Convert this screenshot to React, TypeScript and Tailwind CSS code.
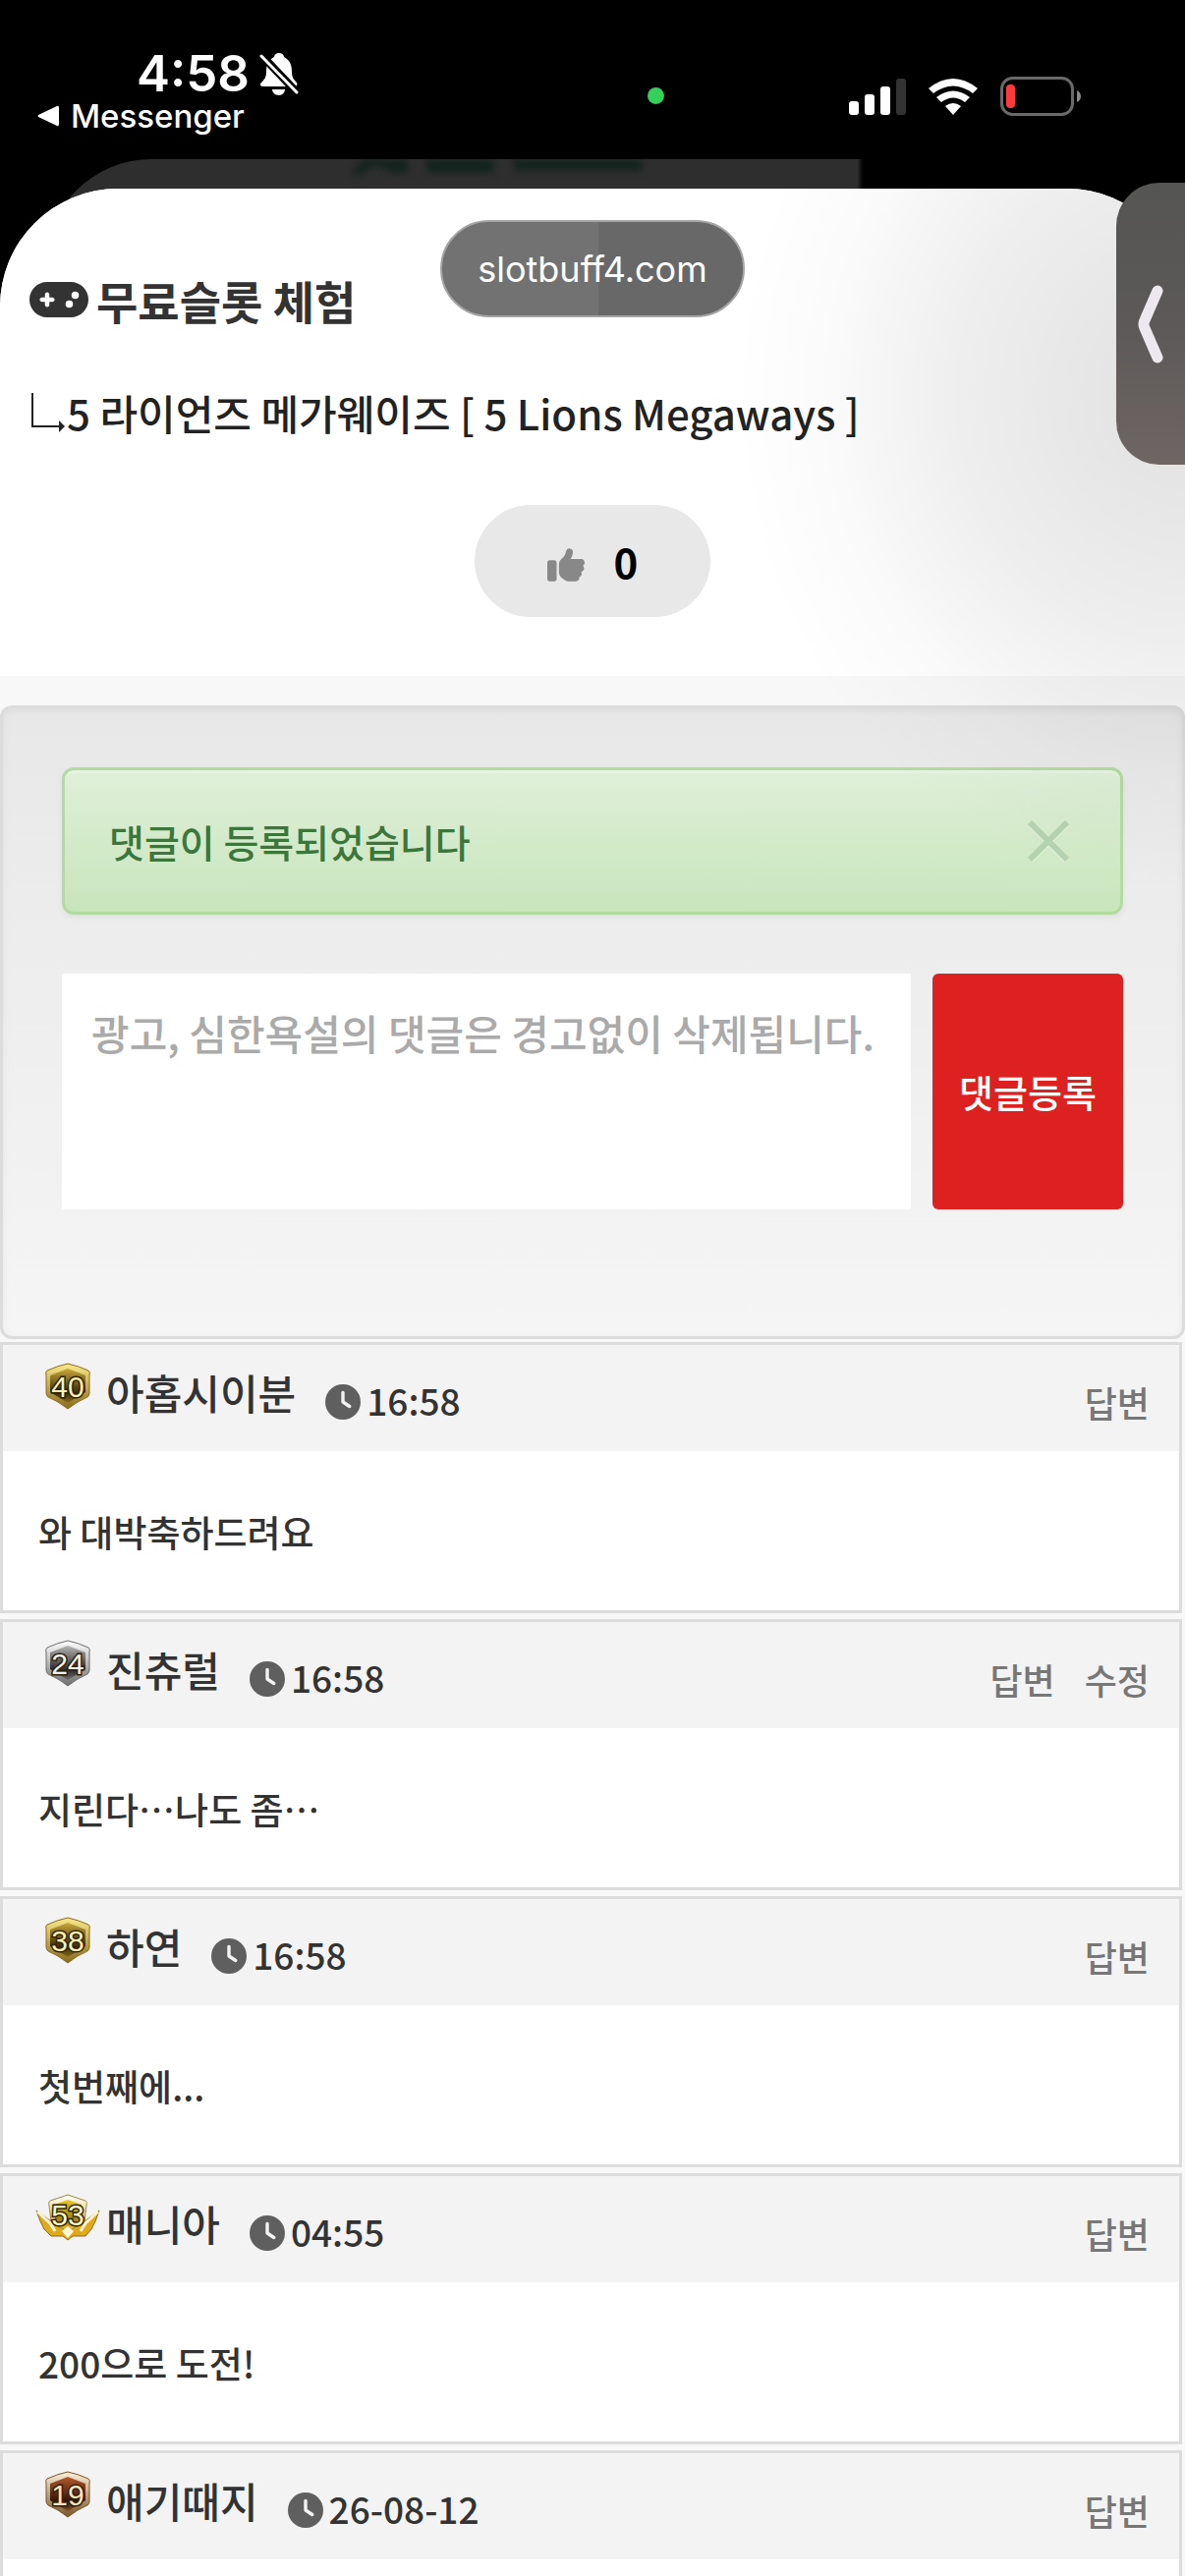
import React from 'react';
import { FaClock, FaGamepad, FaThumbsUp } from 'react-icons/fa6';

type Tone = 'gold' | 'silver' | 'bronze' | 'wings';

interface Comment {
  id: number;
  level: string;
  tone: Tone;
  name: string;
  time: string;
  text: string;
  actions: string[];
}

const comments: Comment[] = [
  { id: 1, level: '40', tone: 'gold', name: '아홉시이분', time: '16:58', text: '와 대박축하드려요', actions: ['답변'] },
  { id: 2, level: '24', tone: 'silver', name: '진츄럴', time: '16:58', text: '지린다⋯나도 좀⋯', actions: ['답변', '수정'] },
  { id: 3, level: '38', tone: 'gold', name: '하연', time: '16:58', text: '첫번째에...', actions: ['답변'] },
  { id: 4, level: '53', tone: 'wings', name: '매니아', time: '04:55', text: '200으로 도전!', actions: ['답변'] },
  { id: 5, level: '19', tone: 'bronze', name: '애기때지', time: '26-08-12', text: '', actions: ['답변'] },
];

// rim light, rim dark, plate top, plate bottom, digits
const tones: Record<Tone, string[]> = {
  gold: ['#fbe98c', '#8a6c1c', '#c9a83a', '#3a2a08', '#fff0b0'],
  silver: ['#ffffff', '#6e6e6e', '#b5b5b5', '#2a2a2a', '#f2f2f2'],
  bronze: ['#fff0dc', '#7a5526', '#b5592c', '#35150a', '#ffe3c0'],
  wings: ['#ffffff', '#d9a514', '#e6c62c', '#a58508', '#fff6c0'],
};

const LevelBadge: React.FC<{ id: number; level: string; tone: Tone }> = ({ id, level, tone }) => {
  const [light, dark, top, bottom, digits] = tones[tone];
  return (
    <svg viewBox="0 0 66 48" className="h-12 w-[66px] shrink-0" role="img" aria-label={`레벨 ${level}`}>
      <defs>
        <linearGradient id={`rim${id}`} x1="0" y1="0" x2="0" y2="1">
          <stop offset="0" stopColor={light} />
          <stop offset="1" stopColor={dark} />
        </linearGradient>
        <linearGradient id={`plate${id}`} x1="0" y1="0" x2="0" y2="1">
          <stop offset="0" stopColor={top} />
          <stop offset="0.7" stopColor={bottom} />
          <stop offset="1" stopColor={dark} />
        </linearGradient>
      </defs>
      {tone === 'wings' ? (
        <>
          <path d="M1 17 L16 28 L33 37 L50 28 L65 17 L61 28 L57 36 L51 43 L38 43 L33 47 L28 43 L16 43 L9 36 L5 28 Z" fill="#e0aa1c" stroke="#8c6a1c" strokeWidth="1" />
          <path d="M2 18 L15 30 L20 38 M64 18 L51 30 L46 38" fill="none" stroke="#fff4d0" strokeWidth="3" />
          <path d="M33 1 L51 7 Q53 8 52 12 L50 28 L33 39 L16 28 L14 12 Q13 8 15 7 Z" fill={`url(#rim${id})`} stroke="#9a8a4a" strokeWidth="1" />
          <path d="M33 6 L47 11 L46 26 L33 34 L20 26 L19 11 Z" fill={`url(#plate${id})`} />
          <path d="M33 33 L39 38 L33 45 L27 38 Z" fill="#fff9d8" />
        </>
      ) : (
        <>
          <path d="M33 1 Q43 3 54 8 Q56 9 55 13 V31 Q55 33 53 35 Q43 39 33 47 Q23 39 13 35 Q11 33 11 31 V13 Q10 9 12 8 Q23 3 33 1 Z" fill={`url(#rim${id})`} stroke={dark} strokeWidth="1" />
          <path d="M33 6 L51 13 V30 L33 41 L15 30 V13 Z" fill={`url(#plate${id})`} />
        </>
      )}
      <text
        x="33"
        y={tone === 'wings' ? 32 : 35}
        textAnchor="middle"
        fontFamily="Liberation Sans, sans-serif"
        fontSize="30"
        fill={digits}
        stroke="#2c2108"
        strokeWidth="3"
        paintOrder="stroke"
      >
        {level}
      </text>
    </svg>
  );
};

const BellOff = () => (
  <svg viewBox="0 0 40 44" className="h-11 w-10" aria-hidden="true">
    <path d="M20 1 C23 1 25 3 25 5 C31 8 33 13 33 20 C33 26 35 28 38 31 C39 33 38 35 36 35 H4 C1 35 0 33 2 31 C5 28 7 26 7 20 C7 13 9 8 15 5 C15 3 17 1 20 1 Z" fill="#fff" />
    <path d="M13 38 H26 C26 41 23 44 20 44 C16 44 13 41 13 38 Z" fill="#fff" />
    <path d="M3 4 L38 41" stroke="#000" strokeWidth="8" />
    <path d="M2 4 L38 41" stroke="#fff" strokeWidth="3" strokeLinecap="round" />
  </svg>
);

const StatusBar: React.FC = () => (
  <header className="flex h-[162px] items-start bg-black pr-[105px] pl-[38px] font-['Inter',sans-serif] text-white">
    <div className="flex w-[621px] flex-col pt-[49px]">
      <div className="flex items-center gap-2.5 pl-[101px]">
        <span className="text-[51px] leading-[52px] font-semibold">4:58</span>
        <BellOff />
      </div>
      <a href="#messenger" className="flex items-center gap-3 text-[33px] leading-[34px]">
        <svg viewBox="0 0 22 22" className="size-[22px]" aria-hidden="true">
          <path d="M20 1 Q22 0 22 3 V19 Q22 22 20 21 L1 12 Q0 11 1 10 Z" fill="#fff" />
        </svg>
        Messenger
      </a>
    </div>
    <div className="mt-[89px] size-[17px] rounded-full bg-[#34d15a]" />
    <div className="mt-[78px] ml-auto flex items-center gap-[22px]">
      <svg viewBox="0 0 58 38" className="h-[38px] w-[58px]" aria-label="신호">
        <rect x="0" y="24" width="10" height="14" rx="3" fill="#fff" />
        <rect x="16" y="17" width="10" height="21" rx="3" fill="#fff" />
        <rect x="32" y="9" width="10" height="29" rx="3" fill="#fff" />
        <rect x="48" y="1" width="10" height="37" rx="3" fill="#333" />
      </svg>
      <svg viewBox="0 0 52 38" className="h-[38px] w-[52px]" aria-label="와이파이">
        <path d="M1 11 Q26 -9 51 11 L46 16 Q26 1 6 16 Z" fill="#fff" />
        <path d="M9 20 Q26 7 43 20 L38 25 Q26 16 14 25 Z" fill="#fff" />
        <path d="M18 29 Q26 23 34 29 L26 38 Z" fill="#fff" />
      </svg>
      <svg viewBox="0 0 83 40" className="h-10 w-[83px]" aria-label="배터리">
        <rect x="1.5" y="1.5" width="72" height="37" rx="11" fill="none" stroke="#6a6a6a" strokeWidth="3" />
        <rect x="6" y="8" width="9" height="24" rx="4" fill="#fb3a3d" />
        <path d="M78 14 Q82 16 82 20 Q82 24 78 26 Z" fill="#8a8a8a" />
      </svg>
    </div>
  </header>
);

// dimmed page that peeks out above the sheet
const BackPage: React.FC = () => (
  <div className="absolute top-0 right-0 left-[45px] h-[120px] overflow-hidden rounded-tl-[110px]">
    <div className="h-full w-[72%] bg-linear-to-r from-[#2e2e2e] from-99% to-black" />
    <svg viewBox="0 0 300 24" className="absolute top-0 left-[308px] h-6 w-[300px] blur-[3px]" aria-hidden="true">
      <path d="M16 0 H62 V14 H44 L36 8 H24 L16 16 H4 Z M80 0 H150 V14 H82 Z M168 0 H300 V12 H172 Z" fill="#14241e" />
    </svg>
  </div>
);

const CommentItem: React.FC<{ comment: Comment }> = ({ comment }) => (
  <li className="border-[3px] border-[#dcdcdc] bg-white">
    <div className="flex h-[108px] justify-between bg-[#f3f3f3] pr-[30px] pl-[33px]">
      <div className="flex items-start">
        <div className="pt-[18px]">
          <LevelBadge id={comment.id} level={comment.level} tone={comment.tone} />
        </div>
        <span className="pt-[18px] pl-1.5 text-[42px] leading-[60px]">{comment.name}</span>
        <FaClock className="mt-10 ml-[30px] size-9 text-[#5f5f5f]" aria-hidden="true" />
        <time className="pt-7 pl-1.5 text-[37px] leading-[56px]">{comment.time}</time>
      </div>
      <div className="flex items-start gap-[30px] pt-8 text-[36px] leading-[52px] text-[#777]">
        {comment.actions.map((action) => (
          <button key={action} type="button">{action}</button>
        ))}
      </div>
    </div>
    <p className="px-9 pt-[54px] pb-[52px] text-[37px] leading-[56px]">{comment.text}</p>
  </li>
);

const App: React.FC = () => {
  return (
    <div className="h-screen overflow-hidden bg-black font-['Noto_Sans_CJK_KR',sans-serif] font-medium text-[#333]">
      <StatusBar />

      <div className="relative pt-[30px]">
        <BackPage />

        <main className="relative overflow-hidden rounded-t-[120px] bg-[#f8f8f8]">
          <section className="flex h-[496px] flex-col bg-white px-[30px]">
            <h1 className="mt-[78px] flex items-center gap-2 text-[46px] leading-[70px] font-bold">
              <FaGamepad className="h-12 w-[60px]" aria-hidden="true" />
              무료슬롯 체험
            </h1>
            <h2 className="mt-[46px] flex items-center text-[42px] leading-[68px] text-[#222]">
              <svg viewBox="0 0 38 44" className="h-11 w-[38px]" aria-hidden="true">
                <path d="M3 2 V36 H32" fill="none" stroke="#222" strokeWidth="2" />
                <path d="M30 30 L36 36 L30 42 Z" fill="#222" />
              </svg>
              5 라이언즈 메가웨이즈 [ 5 Lions Megaways ]
            </h2>
            <button type="button" aria-label="추천" className="mt-[60px] flex h-[114px] w-60 items-center justify-center gap-[30px] self-center rounded-full bg-[#e8e8e8] text-[42px] leading-[60px] font-bold text-black">
              <FaThumbsUp className="mt-2 size-[38px] text-[#888]" aria-hidden="true" />
              0
            </button>
          </section>

          <section className="mt-[30px] rounded-xl border-[3px] border-[#dcdcdc] bg-linear-to-b from-[#e8e8e8] to-[#f5f5f5] px-[60px] pt-[60px] pb-[129px] shadow-[inset_0_3px_9px_rgba(0,0,0,0.05)]">
            <div role="alert" className="flex h-[150px] items-center justify-between rounded-xl border-[3px] border-[#b2dba1] bg-linear-to-b from-[#dff0d8] to-[#c8e5bc] pr-[52px] pl-[45px] text-[39px] leading-[56px] text-[#3c763d] shadow-[inset_0_3px_0_rgba(255,255,255,0.25),0_3px_6px_rgba(0,0,0,0.05)]">
              댓글이 등록되었습니다
              <button type="button" aria-label="닫기">
                <svg viewBox="0 0 42 42" className="size-[42px]" aria-hidden="true">
                  <path d="M3 5 L39 41 M39 5 L3 41" stroke="#e4f2dd" strokeWidth="5" />
                  <path d="M2 2 L40 40 M40 2 L2 40" stroke="#b5d3b0" strokeWidth="6" />
                </svg>
              </button>
            </div>
            <form className="mt-[60px] flex h-60 gap-[22px]" onSubmit={(e) => e.preventDefault()}>
              <textarea
                aria-label="댓글"
                placeholder="광고, 심한욕설의 댓글은 경고없이 삭제됩니다."
                className="min-w-0 flex-1 resize-none overflow-hidden bg-white px-[30px] py-[30px] text-[42px] leading-[60px] outline-none placeholder:text-[#aaa]"
              />
              <button type="submit" className="w-[194px] rounded-md bg-[#dd2020] text-[38px] leading-[52px] text-white">
                댓글등록
              </button>
            </form>
          </section>

          <ul className="mt-[3px] mr-[3px] flex flex-col gap-1.5">
            {comments.map((comment) => (
              <CommentItem key={comment.id} comment={comment} />
            ))}
          </ul>

          {/* soft shade around the side handle */}
          <div className="pointer-events-none absolute top-0 right-0 h-[800px] w-[480px] bg-[radial-gradient(ellipse_460px_500px_at_100%_210px,rgba(0,0,0,0.12),rgba(0,0,0,0.065)_50%,rgba(0,0,0,0.02)_78%,transparent)]" />
        </main>

        <div className="absolute top-[62px] left-1/2 flex h-[99px] w-[310px] -translate-x-1/2 items-center justify-center rounded-full border-2 border-[#a5a5a5] bg-linear-to-r from-[#727272] from-52% to-[#686868] to-52% font-['Inter',sans-serif] text-[36px] leading-[48px] font-normal text-white">
          slotbuff4.com
        </div>

        <button type="button" aria-label="열기" className="absolute top-6 right-0 flex h-[287px] w-[70px] items-center justify-center rounded-l-[44px] bg-linear-to-b from-[#555553] via-[#5c5958] to-[#6f6664]">
          <svg viewBox="0 0 26 80" className="h-20 w-[26px]" aria-hidden="true">
            <path d="M20 6 L7 36 Q5 40 7 44 L20 74" fill="none" stroke="#ece8ee" strokeWidth="11" strokeLinecap="round" />
          </svg>
        </button>
      </div>
    </div>
  );
};

export default App;
